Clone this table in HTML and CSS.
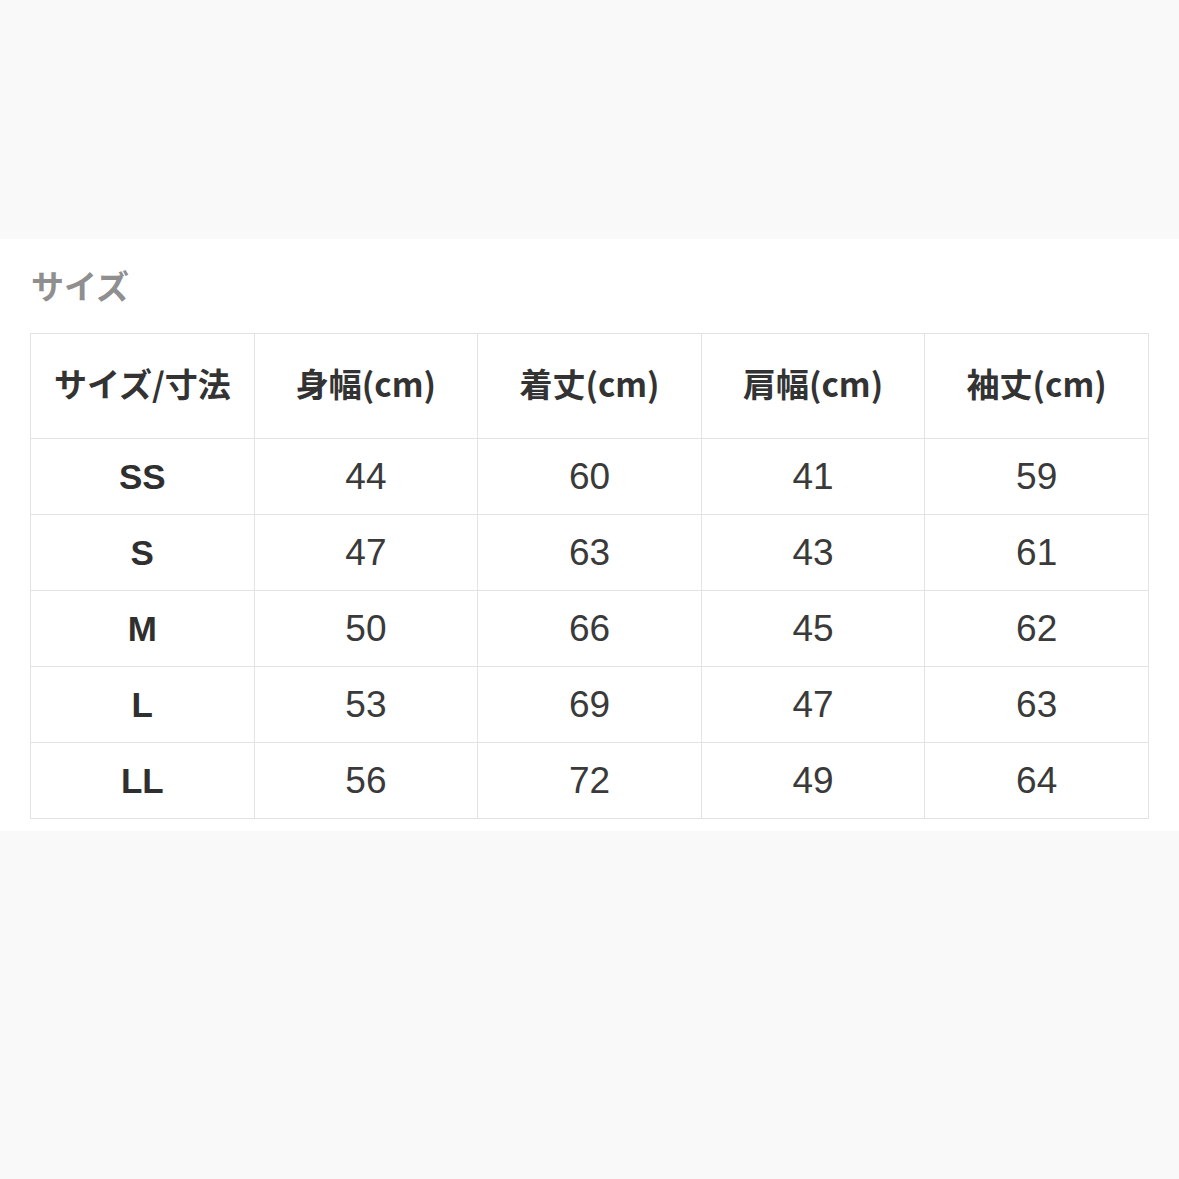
FILE: index.html
```html
<!DOCTYPE html>
<html lang="ja">
<head>
<meta charset="utf-8">
<link rel="stylesheet" href="styles.css">
</head>
<body>
<div class="top"></div>
<section class="panel">
  <h2 class="title">サイズ</h2>
  <table class="sizes">
    <thead>
      <tr><th>サイズ/寸法</th><th>身幅(cm)</th><th>着丈(cm)</th><th>肩幅(cm)</th><th>袖丈(cm)</th></tr>
    </thead>
    <tbody>
      <tr><td class="lbl">SS</td><td>44</td><td>60</td><td>41</td><td>59</td></tr>
      <tr><td class="lbl">S</td><td>47</td><td>63</td><td>43</td><td>61</td></tr>
      <tr><td class="lbl">M</td><td>50</td><td>66</td><td>45</td><td>62</td></tr>
      <tr><td class="lbl">L</td><td>53</td><td>69</td><td>47</td><td>63</td></tr>
      <tr><td class="lbl">LL</td><td>56</td><td>72</td><td>49</td><td>64</td></tr>
    </tbody>
  </table>
</section>
</body>
</html>
```
FILE: styles.css
```css
html, body {
  margin: 0;
  padding: 0;
  background: #f9f9f9;
  font-family: "Liberation Sans", "Noto Sans CJK JP", sans-serif;
  color: #333;
}
.top {
  height: 239px;
}
.panel {
  background: #fff;
  padding: 27px 30px 12px 30px;
}
.title {
  margin: 0 0 29px 1px;
  font-family: "Noto Sans CJK JP", sans-serif;
  font-size: 33px;
  font-weight: 700;
  line-height: 38px;
  color: #8f8f8f;
}
.sizes {
  width: 1119px;
  border-collapse: collapse;
  table-layout: fixed;
}
.sizes th, .sizes td {
  border: 1px solid #e3e3e3;
  text-align: center;
  padding: 0;
}
.sizes th {
  height: 105px;
  padding-bottom: 6px;
  box-sizing: border-box;
  font-family: "Noto Sans CJK JP", sans-serif;
  font-size: 33px;
  font-weight: 700;
  line-height: 40px;
  color: #333;
}
.sizes td {
  height: 76px;
  box-sizing: border-box;
  padding-bottom: 0;
  font-size: 37px;
  line-height: 40px;
  color: #3a3a3a;
}
.sizes td.lbl {
  font-weight: 700;
  font-size: 35px;
  color: #2f2f2f;
}
```
